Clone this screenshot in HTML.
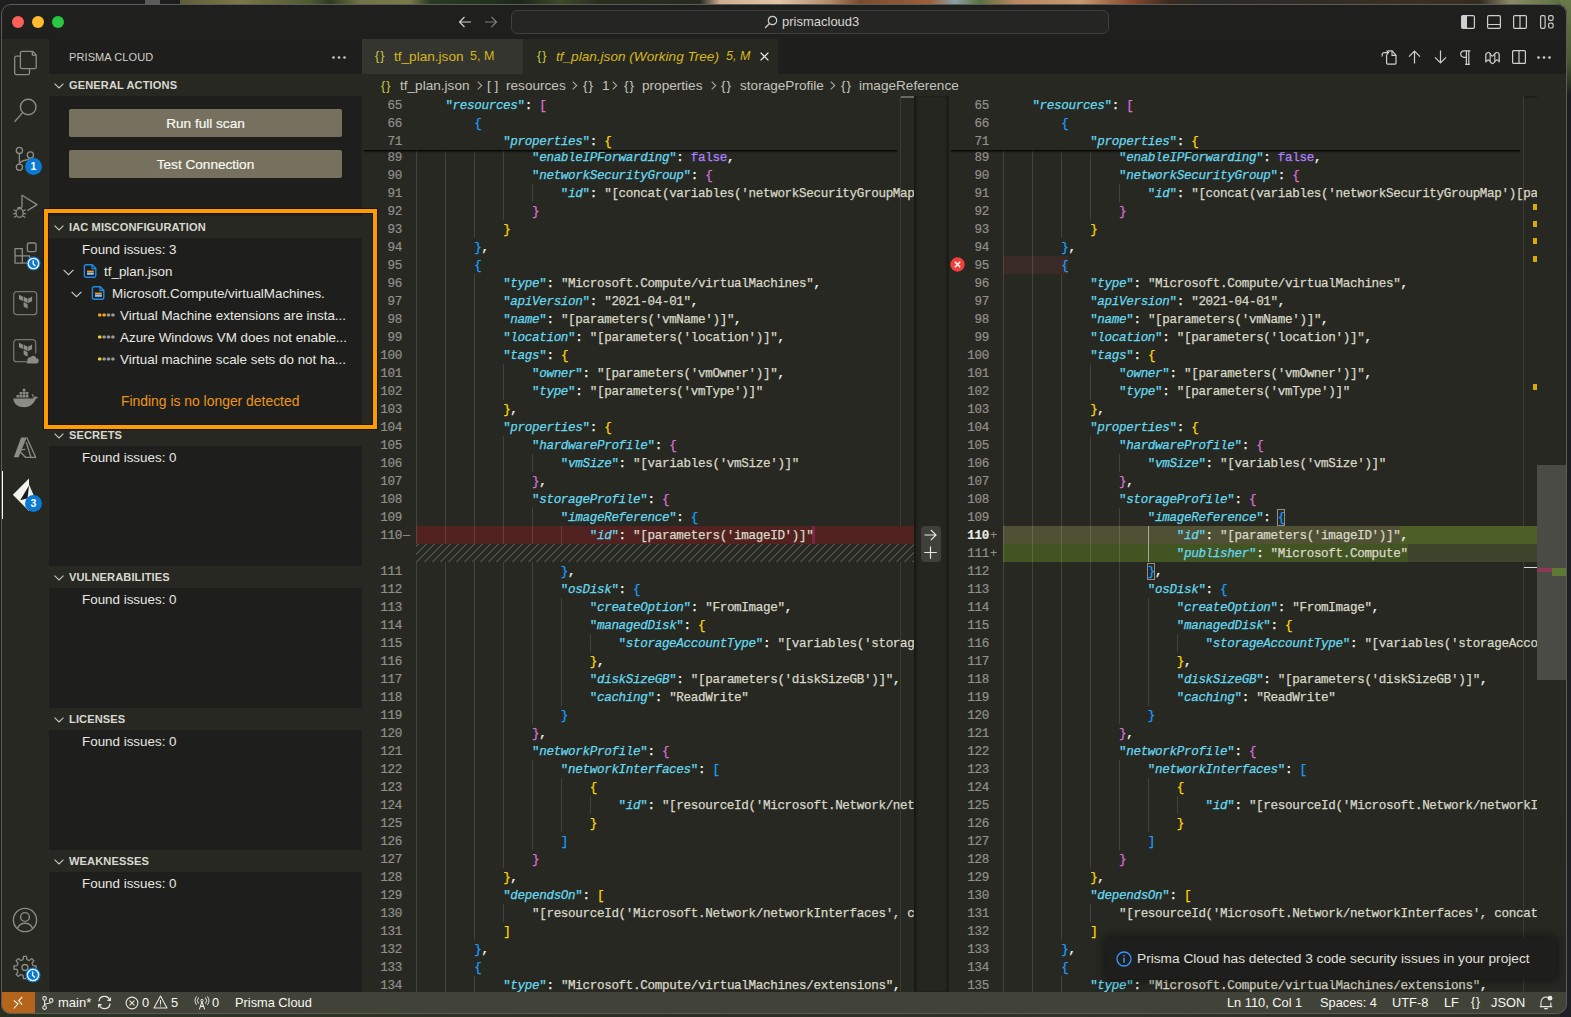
<!DOCTYPE html>
<html><head><meta charset="utf-8">
<style>
*{box-sizing:border-box;margin:0;padding:0}
html,body{width:1571px;height:1017px;overflow:hidden;background:#2b2a20}
body{position:relative;font-family:"Liberation Sans",sans-serif;color:#f8f8f2}
.abs{position:absolute}
#wall{position:absolute;left:0;top:0;width:1571px;height:1017px;
 background:linear-gradient(90deg,#1e1e1e 0,#1e1e1e 145px,#5a5a5a 145px,#5a5a5a 160px,#1e1e1e 160px,#1e1e1e 180px,#5e5e36 180px,#7a7648 240px,#4e5a30 310px,#2e3a22 330px,#707446 360px,#7a7a4a 410px,#2a3a22 430px,#22301e 490px,#1e261a 520px,#3e4a2a 560px,#2a2e20 600px,#262a1e 700px,#cfae8e 720px,#e0c4a6 780px,#b08a6a 830px,#7a4a30 860px,#9a603a 930px,#8aa0a8 955px,#5a7040 980px,#b88660 1015px,#c89a70 1080px,#8a4a30 1130px,#3a2a20 1170px,#2a2a2a 1210px,#2e2c26 1300px,#3a3022 1400px,#352c20 1480px,#8a8a6a 1510px,#6a7a4a 1545px,#4a6a3a 1571px)}
#wallb{position:absolute;left:0;top:1008px;width:1571px;height:9px;background:linear-gradient(90deg,#283022,#2e3424 300px,#2a2e22 700px,#30332a 1100px,#272b22 1571px)}
#wallr{position:absolute;left:1560px;top:0;width:11px;height:1017px;background:linear-gradient(180deg,#6a7a4a 0,#4a5a34 60px,#2a3222 85px,#1c1f22 95px,#1d2024 1017px)}
#win{position:absolute;left:1px;top:4px;width:1566px;height:1010px;border-radius:10px;overflow:hidden;background:#1e1f1c}
#winb{position:absolute;left:1px;top:4px;width:1566px;height:1010px;border-radius:10px;border:1px solid #5b5b58;pointer-events:none}
.w{position:absolute}
/* window coords: page x-1, y-4 */
#title{left:0;top:0;width:1571px;height:39px;background:#1f1f1d}
.tl{position:absolute;top:16px;width:12px;height:12px;border-radius:50%}
#search{left:511px;top:10px;width:598px;height:24px;border:1px solid #3f3f3c;border-radius:6px;background:#252523}
#actbar{left:0;top:39px;width:49px;height:953px;background:#272822}
#sidebar{left:49px;top:39px;width:313px;height:953px;background:#1e1f1c}
#editor{left:362px;top:39px;width:1209px;height:953px;background:#272822}
#status{left:0;top:992px;width:1571px;height:25px;background:#414339;font-size:12px}
.sbt{position:absolute;top:3px;line-height:15px;color:#f8f8f2;white-space:pre}
.sec{position:absolute;left:49px;width:313px;height:22px;background:#272822}
.sec span{position:absolute;left:20px;top:4px;line-height:14px;font-size:11.1px;font-weight:bold;color:#d8d8d0;letter-spacing:0.1px}
.chev{position:absolute;left:6px;top:6px;width:10px;height:10px}
.body{position:absolute;left:0;width:314px;background:#1e1f1c}
.fi{position:absolute;margin-top:1px;font-size:13.4px;color:#e8e8e2;white-space:pre;line-height:16px}
.btn{position:absolute;left:69px;width:273px;height:28px;border-radius:2px;background:#75715e;color:#f8f8f2;font-size:13.6px;text-align:center;line-height:30px;-webkit-text-stroke:0.2px currentColor}
.pane{position:absolute;overflow:hidden}
.ln{position:absolute;-webkit-text-stroke:0.2px currentColor;margin-top:1px;left:0;height:18px;line-height:18px;text-align:right;font-family:"Liberation Mono",monospace;font-size:12.6px;letter-spacing:-0.34px;color:#90908a}
.mk{position:absolute;margin-top:1px;height:18px;line-height:18px;font-family:"Liberation Mono",monospace;font-size:12px;color:#90908a}
.cl{position:absolute;margin-top:1px;height:18px;line-height:18px;white-space:pre;-webkit-text-stroke:0.25px currentColor;font-family:"Liberation Mono",monospace;font-size:12.6px;letter-spacing:-0.34px;color:#f8f8f2}
.ig{position:absolute;width:1px;height:18px;background:rgba(255,255,235,.13)}
.k{color:#66D9EF}
.k i{font-style:italic}
.s{color:#D9D9C8}
.p{color:#F8F8F2}
.n{color:#AE81FF}
.sticky{position:absolute;left:0;top:0;height:54px;background:#272822}
.stsh{position:absolute;left:2px;top:54px;height:3px;background:linear-gradient(#000 0,rgba(0,0,0,.55) 1px,rgba(0,0,0,0) 3px)}
.hatch{position:absolute;background:repeating-linear-gradient(-45deg,#272822 0,#272822 4.6px,#4b4b45 4.6px,#4b4b45 5.66px)}
.tab{position:absolute;top:0;height:35px;font-size:13.6px;line-height:35px;white-space:pre}
.bc{position:absolute;margin-top:1px;top:0;height:22px;line-height:22px;font-size:13.6px;color:#c4c4bc;white-space:pre}
svg{position:absolute;overflow:visible}
</style></head><body>
<div id="wall"></div><div id="wallb"></div><div id="wallr"></div>
<div id="win"><div class="w" style="left:-1px;top:-4px;width:1571px;height:1017px">
 <div id="title" class="w">
  <div class="tl" style="left:12px;background:#fe5f57"></div>
  <div class="tl" style="left:32px;background:#febc2e"></div>
  <div class="tl" style="left:52px;background:#28c840"></div>
  <svg style="left:458px;top:16px" width="14" height="12" viewBox="0 0 14 12"><path d="M13 6H1.5M6.5 1L1.5 6l5 5" stroke="#cfcfcf" stroke-width="1.2" fill="none"/></svg>
  <svg style="left:484px;top:16px" width="14" height="12" viewBox="0 0 14 12"><path d="M1 6h11.5M7.5 1l5 5-5 5" stroke="#7d7d7a" stroke-width="1.2" fill="none"/></svg>
  <div id="search" class="w"></div>
  <svg style="left:764px;top:15px" width="14" height="14" viewBox="0 0 14 14"><circle cx="8.5" cy="5.5" r="4.2" stroke="#cfcfcf" stroke-width="1.2" fill="none"/><path d="M5.5 8.5L1 13" stroke="#cfcfcf" stroke-width="1.2"/></svg>
  <div class="abs" style="left:782px;top:14px;font-size:13px;line-height:16px;color:#d6d6d2">prismacloud3</div>
  <!-- layout icons -->
  <svg style="left:1461px;top:15px" width="14" height="14" viewBox="0 0 14 14"><rect x="0.6" y="0.6" width="12.8" height="12.8" rx="1.3" stroke="#cfcfcf" stroke-width="1.2" fill="none"/><rect x="1" y="1" width="5" height="12" fill="#cfcfcf"/></svg>
  <svg style="left:1487px;top:15px" width="14" height="14" viewBox="0 0 14 14"><rect x="0.6" y="0.6" width="12.8" height="12.8" rx="1.3" stroke="#cfcfcf" stroke-width="1.2" fill="none"/><path d="M1 9.5h12" stroke="#cfcfcf" stroke-width="1.2"/></svg>
  <svg style="left:1513px;top:15px" width="14" height="14" viewBox="0 0 14 14"><rect x="0.6" y="0.6" width="12.8" height="12.8" rx="1.3" stroke="#cfcfcf" stroke-width="1.2" fill="none"/><path d="M7 1v12" stroke="#cfcfcf" stroke-width="1.2"/></svg>
  <svg style="left:1540px;top:15px" width="14" height="14" viewBox="0 0 14 14"><rect x="0.6" y="0.6" width="4.5" height="12.8" rx="1.3" stroke="#cfcfcf" stroke-width="1.2" fill="none"/><rect x="8.6" y="0.6" width="4.5" height="4.8" rx="1.5" stroke="#cfcfcf" stroke-width="1.2" fill="none"/><rect x="8.6" y="8.2" width="4.5" height="4.8" rx="1.5" stroke="#cfcfcf" stroke-width="1.2" fill="none"/></svg>
 </div>

 <div id="actbar" class="w"></div>
<!-- explorer -->
<svg style="left:13px;top:50px" width="24" height="26" viewBox="0 0 24 26"><path d="M7.2 6.2H3.3a1.6 1.6 0 0 0-1.6 1.6v15.3a1.6 1.6 0 0 0 1.6 1.6h11.6a1.6 1.6 0 0 0 1.6-1.6v-4.3" stroke="#8c8c86" stroke-width="1.3" fill="none"/><path d="M9 1.3h10.6l3.6 3.6v12.2a1.6 1.6 0 0 1-1.6 1.6H9a1.6 1.6 0 0 1-1.6-1.6V2.9A1.6 1.6 0 0 1 9 1.3zM19.3 1.3v3.8h3.9" stroke="#8c8c86" stroke-width="1.3" fill="none" stroke-linejoin="round"/></svg>
<!-- search -->
<svg style="left:13px;top:97px" width="26" height="27" viewBox="0 0 26 27"><circle cx="15.2" cy="10" r="7.8" stroke="#8c8c86" stroke-width="1.4" fill="none"/><path d="M9.6 15.6L1.6 24.8" stroke="#8c8c86" stroke-width="1.4"/></svg>
<!-- scm -->
<svg style="left:13px;top:144px" width="26" height="28" viewBox="0 0 26 28"><circle cx="6.4" cy="6.4" r="3.1" stroke="#8c8c86" stroke-width="1.3" fill="none"/><circle cx="17.4" cy="11" r="3.1" stroke="#8c8c86" stroke-width="1.3" fill="none"/><circle cx="6.4" cy="23.3" r="3.1" stroke="#8c8c86" stroke-width="1.3" fill="none"/><path d="M6.4 9.5v10.7M6.4 20.2c0-5 11-3.5 11-6.1" stroke="#8c8c86" stroke-width="1.3" fill="none"/></svg>
<div class="abs" style="left:25px;top:158px;width:17px;height:17px;border-radius:50%;background:#0a7ad4;color:#fff;font-size:10.5px;font-weight:bold;text-align:center;line-height:17px">1</div>
<!-- debug -->
<svg style="left:12px;top:193px" width="28" height="26" viewBox="0 0 28 26"><path d="M10 14.4V2.2L25 11.6l-9.6 6" stroke="#8c8c86" stroke-width="1.3" fill="none" stroke-linejoin="round"/><ellipse cx="7.6" cy="20" rx="3.6" ry="4.3" stroke="#8c8c86" stroke-width="1.3" fill="none"/><path d="M1.6 16.6l2.6 1.6M1.2 20.6h2.8M1.8 24.6l2.6-1.6M13.6 16.6l-2.6 1.6M14 20.6h-2.8M13.4 24.6l-2.6-1.6M5.6 15.8c0-2 4-2 4 0" stroke="#8c8c86" stroke-width="1.2" fill="none"/></svg>
<!-- extensions -->
<svg style="left:12px;top:240px" width="28" height="28" viewBox="0 0 28 28"><path d="M3 8.6h7.3v7.3H3zM3 15.9h7.3v7.3H3zM10.3 15.9h7.3v7.3h-7.3z" stroke="#8c8c86" stroke-width="1.3" fill="none" stroke-linejoin="round"/><rect x="15.4" y="3" width="8.6" height="8.6" rx="1.4" stroke="#8c8c86" stroke-width="1.3" fill="none"/></svg>
<svg style="left:26px;top:256px" width="15" height="15" viewBox="0 0 15 15"><circle cx="7.5" cy="7.5" r="7" fill="#0a7ad4"/><circle cx="7.5" cy="7.5" r="5.2" stroke="#fff" stroke-width="1.3" fill="none"/><path d="M7.2 4.3v3.6l2.2 2" stroke="#fff" stroke-width="1.3" fill="none"/></svg>
<!-- terraform -->
<svg style="left:13px;top:291px" width="25" height="25" viewBox="0 0 25 25"><rect x="0.7" y="0.7" width="23" height="23" rx="3" stroke="#76766f" stroke-width="1.3" fill="none"/><path d="M10.6 5.4l4 2.3v4.6l-4-2.3zM15.1 7.7l4-2.3V10l-4 2.3zM5.9 3.4l4 2.3v4.6l-4-2.3zM10.6 10.9l4 2.3v4.6l-4-2.3z" fill="#8c8c86"/></svg>
<svg style="left:13px;top:339px" width="25" height="25" viewBox="0 0 25 25"><path d="M22.7 14.5V3.7a3 3 0 0 0-3-3H3.7a3 3 0 0 0-3 3v16a3 3 0 0 0 3 3h9.5" stroke="#76766f" stroke-width="1.3" fill="none"/><path d="M10.6 5.4l4 2.3v4.6l-4-2.3zM15.1 7.7l4-2.3V10l-4 2.3zM5.9 3.4l4 2.3v4.6l-4-2.3zM10.6 10.9l4 2.3v4.6l-4-2.3z" fill="#8c8c86"/><path d="M14.5 24.5h8.5a2.6 2.6 0 0 0 .2-5.2 3 3 0 0 0-5.6-1 2.5 2.5 0 0 0-3.1 3.2 1.6 1.6 0 0 0 0 3z" fill="#8c8c86"/></svg>
<!-- docker -->
<svg style="left:12px;top:388px" width="27" height="22" viewBox="0 0 27 22"><path d="M1.2 10.5h19.6c.6-1.4 1.8-2.2 3.2-2 1 .1 1.8.6 2.3 1.2-.8.4-1.6.8-2.4.9-1.6 4.8-5.4 8.6-11.4 8.6C6.2 19.2 1.6 16.4 1.2 10.5z" fill="#8c8c86"/><path d="M4.5 7h2.6v2.6H4.5zM7.6 7h2.6v2.6H7.6zM10.7 7h2.6v2.6h-2.6zM13.8 7h2.6v2.6h-2.6zM7.6 3.9h2.6v2.6H7.6zM10.7 3.9h2.6v2.6h-2.6zM13.8 3.9h2.6v2.6h-2.6zM10.7.8h2.6v2.6h-2.6z" fill="#8c8c86"/><path d="M20 6.2c.8.6 1.2 1.6 1.1 2.6" stroke="#8c8c86" stroke-width="1.3" fill="none"/></svg>
<!-- azure -->
<svg style="left:13px;top:436px" width="24" height="23" viewBox="0 0 24 23"><path d="M8.1 1.4h5.6L5.6 21.3H.8z" fill="#8c8c86"/><path d="M13.7 1.4l9 19.9H12.4L5.9 14.2l6.5-.8" stroke="#8c8c86" stroke-width="1.3" fill="none" stroke-linejoin="round"/><path d="M13.2 6.2l4.8 15" stroke="#8c8c86" stroke-width="1.3"/></svg>
<!-- prisma active -->
<div class="abs" style="left:1px;top:471px;width:2px;height:48px;background:#f8f8f2"></div>
<svg style="left:12px;top:478px" width="24" height="34" viewBox="0 0 24 34"><path d="M17 0.6L0.8 16.8 17 33z" fill="#f3f3ee"/><path d="M17 6.6l-1.2 13.8 6.6-1.4z" fill="#f3f3ee"/><path d="M17 7.6l-8.8 14.6 7.4-2z" fill="#1a1a1a"/></svg>
<div class="abs" style="left:25px;top:495px;width:17px;height:17px;border-radius:50%;background:#0a7ad4;color:#fff;font-size:10.5px;font-weight:bold;text-align:center;line-height:17px">3</div>
<!-- account -->
<svg style="left:12px;top:907px" width="26" height="26" viewBox="0 0 26 26"><circle cx="13" cy="13" r="11.6" stroke="#8c8c86" stroke-width="1.4" fill="none"/><circle cx="13" cy="10" r="4.4" stroke="#8c8c86" stroke-width="1.4" fill="none"/><path d="M5.4 21.4c1.4-3.6 4.2-5.2 7.6-5.2s6.2 1.6 7.6 5.2" stroke="#8c8c86" stroke-width="1.4" fill="none"/></svg>
<!-- settings -->
<svg style="left:12px;top:955px" width="26" height="26" viewBox="0 0 26 26"><path d="M11.51 1.40 L14.49 1.40 L14.91 4.53 L17.28 5.51 L19.79 3.60 L21.90 5.71 L19.99 8.22 L20.97 10.59 L24.10 11.01 L24.10 13.99 L20.97 14.41 L19.99 16.78 L21.90 19.29 L19.79 21.40 L17.28 19.49 L14.91 20.47 L14.49 23.60 L11.51 23.60 L11.09 20.47 L8.72 19.49 L6.21 21.40 L4.10 19.29 L6.01 16.78 L5.03 14.41 L1.90 13.99 L1.90 11.01 L5.03 10.59 L6.01 8.22 L4.10 5.71 L6.21 3.60 L8.72 5.51 L11.09 4.53z" stroke="#8c8c86" stroke-width="1.3" fill="none" stroke-linejoin="round"/><circle cx="13" cy="12.5" r="3" stroke="#8c8c86" stroke-width="1.3" fill="none"/></svg>
<svg style="left:25px;top:967px" width="16" height="16" viewBox="0 0 16 16"><circle cx="8" cy="8" r="7.6" fill="#0a7ad4"/><circle cx="8" cy="8" r="5.6" stroke="#fff" stroke-width="1.3" fill="none"/><path d="M7.6 4.6v3.8l2.4 2" stroke="#fff" stroke-width="1.3" fill="none"/></svg>


 <div id="sidebar" class="w"></div>
<div class="abs" style="left:69px;top:50px;font-size:11px;line-height:14px;color:#cfcfc8;letter-spacing:0.1px">PRISMA CLOUD</div>
<svg style="left:332px;top:56px" width="14" height="3" viewBox="0 0 14 3"><circle cx="1.5" cy="1.5" r="1.35" fill="#c8c8c2"/><circle cx="7" cy="1.5" r="1.35" fill="#c8c8c2"/><circle cx="12.5" cy="1.5" r="1.35" fill="#c8c8c2"/></svg>
<!-- sections -->
<div class="sec" style="top:74px"><svg class="chev" style="left:5px;top:7px" width="11" height="7" viewBox="0 0 11 7"><path d="M0.6 0.8L5.5 5.7 10.4 0.8" stroke="#c8c8c2" stroke-width="1.2" fill="none"/></svg><span>GENERAL ACTIONS</span></div>
<div class="btn" style="top:109px">Run full scan</div>
<div class="btn" style="top:150px">Test Connection</div>
<div class="sec" style="top:216px"><svg class="chev" style="left:5px;top:7px" width="11" height="7" viewBox="0 0 11 7"><path d="M0.6 0.8L5.5 5.7 10.4 0.8" stroke="#c8c8c2" stroke-width="1.2" fill="none"/></svg><span>IAC MISCONFIGURATION</span></div>
<div class="fi" style="left:82px;top:241px">Found issues: 3</div>
<svg style="left:63px;top:269px" width="11" height="7" viewBox="0 0 11 7"><path d="M0.6 0.8L5.5 5.7 10.4 0.8" stroke="#c8c8c2" stroke-width="1.2" fill="none"/></svg>
<svg style="left:84px;top:264px" width="13" height="14" viewBox="0 0 13 14"><path d="M1.8 0.8h6.4l3.6 3.6v7.4a1.4 1.4 0 0 1-1.4 1.4H1.8A1.4 1.4 0 0 1 .4 11.8V2.2A1.4 1.4 0 0 1 1.8.8z" stroke="#1e8ae6" stroke-width="1.4" fill="none"/><path d="M8 .8v3.8h3.8" stroke="#1e8ae6" stroke-width="1.2" fill="none"/><rect x="3" y="6.6" width="6.8" height="1.8" fill="#f29a2e"/><rect x="3" y="8.6" width="6.8" height="2.2" fill="#8ec5f0"/></svg>
<div class="fi" style="left:104px;top:263px">tf_plan.json</div>
<svg style="left:71px;top:291px" width="11" height="7" viewBox="0 0 11 7"><path d="M0.6 0.8L5.5 5.7 10.4 0.8" stroke="#c8c8c2" stroke-width="1.2" fill="none"/></svg>
<svg style="left:92px;top:286px" width="13" height="14" viewBox="0 0 13 14"><path d="M1.8 0.8h6.4l3.6 3.6v7.4a1.4 1.4 0 0 1-1.4 1.4H1.8A1.4 1.4 0 0 1 .4 11.8V2.2A1.4 1.4 0 0 1 1.8.8z" stroke="#1e8ae6" stroke-width="1.4" fill="none"/><path d="M8 .8v3.8h3.8" stroke="#1e8ae6" stroke-width="1.2" fill="none"/><rect x="3" y="6.6" width="6.8" height="1.8" fill="#f29a2e"/><rect x="3" y="8.6" width="6.8" height="2.2" fill="#8ec5f0"/></svg>
<div class="fi" style="left:112px;top:285px">Microsoft.Compute/virtualMachines.</div>
<svg style="left:98px;top:313px" width="17" height="4" viewBox="0 0 17 4"><rect x="0" y="0.5" width="3.4" height="3" rx="1.2" fill="#f5a623"/><rect x="4.4" y="0.5" width="3.4" height="3" rx="1.2" fill="#f5a623"/><rect x="8.8" y="0.5" width="3.4" height="3" rx="1.2" fill="#9a9a96"/><rect x="13.2" y="0.5" width="3.4" height="3" rx="1.2" fill="#9a9a96"/></svg>
<div class="fi" style="left:120px;top:307px">Virtual Machine extensions are insta...</div>
<svg style="left:98px;top:335px" width="17" height="4" viewBox="0 0 17 4"><rect x="0" y="0.5" width="3.4" height="3" rx="1.2" fill="#f5d033"/><rect x="4.4" y="0.5" width="3.4" height="3" rx="1.2" fill="#9a9a96"/><rect x="8.8" y="0.5" width="3.4" height="3" rx="1.2" fill="#9a9a96"/><rect x="13.2" y="0.5" width="3.4" height="3" rx="1.2" fill="#9a9a96"/></svg>
<div class="fi" style="left:120px;top:329px">Azure Windows VM does not enable...</div>
<svg style="left:98px;top:357px" width="17" height="4" viewBox="0 0 17 4"><rect x="0" y="0.5" width="3.4" height="3" rx="1.2" fill="#f5d033"/><rect x="4.4" y="0.5" width="3.4" height="3" rx="1.2" fill="#9a9a96"/><rect x="8.8" y="0.5" width="3.4" height="3" rx="1.2" fill="#9a9a96"/><rect x="13.2" y="0.5" width="3.4" height="3" rx="1.2" fill="#9a9a96"/></svg>
<div class="fi" style="left:120px;top:351px">Virtual machine scale sets do not ha...</div>
<div class="fi" style="left:121px;top:392px;color:#ec951c;font-size:13.9px">Finding is no longer detected</div>
<div class="sec" style="top:424px"><svg class="chev" style="left:5px;top:7px" width="11" height="7" viewBox="0 0 11 7"><path d="M0.6 0.8L5.5 5.7 10.4 0.8" stroke="#c8c8c2" stroke-width="1.2" fill="none"/></svg><span>SECRETS</span></div>
<div class="fi" style="left:82px;top:449px">Found issues: 0</div>
<div class="sec" style="top:566px"><svg class="chev" style="left:5px;top:7px" width="11" height="7" viewBox="0 0 11 7"><path d="M0.6 0.8L5.5 5.7 10.4 0.8" stroke="#c8c8c2" stroke-width="1.2" fill="none"/></svg><span>VULNERABILITIES</span></div>
<div class="fi" style="left:82px;top:591px">Found issues: 0</div>
<div class="sec" style="top:708px"><svg class="chev" style="left:5px;top:7px" width="11" height="7" viewBox="0 0 11 7"><path d="M0.6 0.8L5.5 5.7 10.4 0.8" stroke="#c8c8c2" stroke-width="1.2" fill="none"/></svg><span>LICENSES</span></div>
<div class="fi" style="left:82px;top:733px">Found issues: 0</div>
<div class="sec" style="top:850px"><svg class="chev" style="left:5px;top:7px" width="11" height="7" viewBox="0 0 11 7"><path d="M0.6 0.8L5.5 5.7 10.4 0.8" stroke="#c8c8c2" stroke-width="1.2" fill="none"/></svg><span>WEAKNESSES</span></div>
<div class="fi" style="left:82px;top:875px">Found issues: 0</div>
<!-- orange highlight box -->
<div class="abs" style="z-index:5;left:44px;top:209px;width:333px;height:220px;border:4px solid #ff9a00;box-shadow:0 0 0 1px rgba(10,14,20,.6),inset 0 0 0 1px rgba(10,14,20,.6)"></div>


 <div id="editor" class="w"></div>
 <div class="abs" style="left:362px;top:39px;width:1209px;height:35px;background:#1e1f1c"></div>
<div class="abs" style="left:362px;top:39px;width:161px;height:35px;background:#34352f"></div>
<div class="abs" style="left:523px;top:39px;width:255px;height:35px;background:#272822"></div>
<div class="tab" style="left:375px;top:39px;color:#cbcb41;font-size:12.5px;letter-spacing:1px">{}</div>
<div class="tab" style="left:394px;top:39px;color:#d7b71d">tf_plan.json</div>
<div class="tab" style="left:470px;top:39px;color:#d7b71d;font-size:12.5px">5, M</div>
<div class="tab" style="left:537px;top:39px;color:#cbcb41;font-size:12.5px;letter-spacing:1px">{}</div>
<div class="tab" style="left:556px;top:39px;color:#d7b71d;font-style:italic">tf_plan.json (Working Tree)</div>
<div class="tab" style="left:726px;top:39px;color:#d7b71d;font-style:italic;font-size:12.5px">5, M</div>
<svg style="left:760px;top:52px" width="9" height="9" viewBox="0 0 9 9"><path d="M.6.6l7.8 7.8M8.4.6L.6 8.4" stroke="#e8e8e2" stroke-width="1.3"/></svg>
<!-- editor toolbar -->
<svg style="left:1381px;top:50px" width="16" height="15" viewBox="0 0 16 15"><path d="M5.6 4.4V13a1.2 1.2 0 0 0 1.2 1.2h7a1.2 1.2 0 0 0 1.2-1.2V5.4L11.2.8H6.8" stroke="#cfcfcb" stroke-width="1.2" fill="none" stroke-linejoin="round"/><path d="M11 .8v4.6h4.2" stroke="#cfcfcb" stroke-width="1.1" fill="none"/><path d="M1.2 6.4V4.6a2 2 0 0 1 2-2h4M5.6 .6l2 2-2 2" stroke="#cfcfcb" stroke-width="1.2" fill="none"/></svg>
<svg style="left:1408px;top:50px" width="13" height="14" viewBox="0 0 13 14"><path d="M6.5 13.6V1.2M1 6.6l5.5-5.5L12 6.6" stroke="#cfcfcb" stroke-width="1.2" fill="none"/></svg>
<svg style="left:1434px;top:50px" width="13" height="14" viewBox="0 0 13 14"><path d="M6.5.4v12.4M1 7.4l5.5 5.5L12 7.4" stroke="#cfcfcb" stroke-width="1.2" fill="none"/></svg>
<svg style="left:1460px;top:50px" width="11" height="15" viewBox="0 0 11 15"><path d="M5 .8h5.4M6.4 .8v13.6M8.8 .8v13.6M6.4 7.4H4a3.3 3.3 0 0 1 0-6.6h2.4" stroke="#cfcfcb" stroke-width="1.2" fill="none"/><path d="M5.2 14.4h4.6" stroke="#cfcfcb" stroke-width="1.2"/></svg>
<svg style="left:1485px;top:51px" width="15" height="13" viewBox="0 0 15 13"><path d="M.8 3.2c2-2.4 3.4-2.4 4.6 0s2.6 2.4 4.2 0 3-2.4 4.6 0v7.6c-1.6-2.4-3-2.4-4.6 0s-2.8 2.4-4.2 0-2.6-2.4-4.6 0z" stroke="#bdbdb8" stroke-width="1.4" fill="none" stroke-linejoin="round"/><path d="M5.2 2v9M9.8 2v9" stroke="#bdbdb8" stroke-width="1.2"/></svg>
<svg style="left:1512px;top:50px" width="14" height="14" viewBox="0 0 14 14"><rect x=".6" y=".6" width="12.8" height="12.8" rx="1" stroke="#cfcfcb" stroke-width="1.2" fill="none"/><path d="M7 .6v12.8" stroke="#cfcfcb" stroke-width="1.2"/></svg>
<svg style="left:1537px;top:56px" width="14" height="3" viewBox="0 0 14 3"><circle cx="1.5" cy="1.5" r="1.35" fill="#cfcfcb"/><circle cx="7" cy="1.5" r="1.35" fill="#cfcfcb"/><circle cx="12.5" cy="1.5" r="1.35" fill="#cfcfcb"/></svg>
<!-- breadcrumbs -->
<div class="abs" style="left:362px;top:74px;width:1205px;height:22px;background:#272822"></div>
<div class="bc" style="left:381px;top:74px;color:#cbcb41;font-size:12.5px;letter-spacing:1px">{}</div>
<div class="bc" style="left:400px;top:74px">tf_plan.json</div>
<div class="bc" style="left:487px;top:74px">[ ]</div>
<div class="bc" style="left:506px;top:74px">resources</div>
<div class="bc" style="left:583px;top:74px;letter-spacing:1px">{}</div>
<div class="bc" style="left:602px;top:74px">1</div>
<div class="bc" style="left:624px;top:74px;letter-spacing:1px">{}</div>
<div class="bc" style="left:642px;top:74px">properties</div>
<div class="bc" style="left:721px;top:74px;letter-spacing:1px">{}</div>
<div class="bc" style="left:740px;top:74px">storageProfile</div>
<div class="bc" style="left:841px;top:74px;letter-spacing:1px">{}</div>
<div class="bc" style="left:859px;top:74px">imageReference</div>
<svg style="left:477px;top:81px" width="6" height="9" viewBox="0 0 6 9"><path d="M.7.7l4 3.8-4 3.8" stroke="#a8a8a2" stroke-width="1.1" fill="none"/></svg>
<svg style="left:572px;top:81px" width="6" height="9" viewBox="0 0 6 9"><path d="M.7.7l4 3.8-4 3.8" stroke="#a8a8a2" stroke-width="1.1" fill="none"/></svg>
<svg style="left:612px;top:81px" width="6" height="9" viewBox="0 0 6 9"><path d="M.7.7l4 3.8-4 3.8" stroke="#a8a8a2" stroke-width="1.1" fill="none"/></svg>
<svg style="left:711px;top:81px" width="6" height="9" viewBox="0 0 6 9"><path d="M.7.7l4 3.8-4 3.8" stroke="#a8a8a2" stroke-width="1.1" fill="none"/></svg>
<svg style="left:830px;top:81px" width="6" height="9" viewBox="0 0 6 9"><path d="M.7.7l4 3.8-4 3.8" stroke="#a8a8a2" stroke-width="1.1" fill="none"/></svg>
<!-- divider between panes -->
<div class="abs" style="left:914px;top:96px;width:35px;height:896px;background:#252620;box-shadow:inset 3px 0 3px -1px rgba(0,0,0,.45),inset -3px 0 3px -1px rgba(0,0,0,.35)"></div>
<div class="abs" style="left:921px;top:526px;width:20px;height:36px;border-radius:4px;background:#3f403a"></div>
<svg style="left:924px;top:529px" width="13" height="12" viewBox="0 0 13 12"><path d="M.6 6h11.4M6.8 .8L12 6l-5.2 5.2" stroke="#e8e8e2" stroke-width="1.2" fill="none"/></svg>
<svg style="left:924px;top:546px" width="13" height="13" viewBox="0 0 13 13"><path d="M6.5 .4v12.4M.2 6.5h12.6" stroke="#e8e8e2" stroke-width="1.2"/></svg>
<!-- scrollbars lines -->
<div class="abs" style="left:900px;top:96px;width:1px;height:896px;background:#3b3c36"></div>
<div class="abs" style="left:901px;top:96px;width:13px;height:2px;background:#6b6b66"></div>
<div class="abs" style="left:1523px;top:96px;width:1px;height:896px;background:#3b3c36"></div>
<div class="abs" style="left:1524px;top:96px;width:13px;height:3px;background:linear-gradient(#1b1c18,#272822)"></div>
<div class="abs" style="left:1524px;top:567px;width:13px;height:1px;background:#dcdcd6"></div>
<!-- overview markers right pane -->
<div class="abs" style="left:1533px;top:204px;width:4px;height:6px;background:#d9a70f"></div>
<div class="abs" style="left:1533px;top:221px;width:4px;height:6px;background:#d9a70f"></div>
<div class="abs" style="left:1533px;top:238px;width:4px;height:6px;background:#d9a70f"></div>
<div class="abs" style="left:1533px;top:256px;width:4px;height:6px;background:#d9a70f"></div>
<div class="abs" style="left:1533px;top:384px;width:4px;height:6px;background:#d9a70f"></div>
<!-- diff overview ruler -->
<div class="abs" style="left:1537px;top:465px;width:30px;height:215px;background:#4a4b45"></div>
<div class="abs" style="left:1537px;top:568px;width:15px;height:4px;background:#8a3a55"></div>
<div class="abs" style="left:1552px;top:568px;width:15px;height:8px;background:#5c7a33"></div>
<svg style="left:950px;top:257px;z-index:3" width="15" height="15" viewBox="0 0 15 15"><circle cx="7.5" cy="7.5" r="7.2" fill="#f0413c"/><path d="M4.8 4.8l5.4 5.4M10.2 4.8l-5.4 5.4" stroke="#fff" stroke-width="1.5"/></svg>
<div class="abs" style="z-index:3;left:1277px;top:509px;width:8px;height:17px;border:1px solid #8f8f88"></div>
<div class="abs" style="z-index:3;left:1147px;top:563px;width:8px;height:17px;border:1px solid #8f8f88"></div>

 <div class="pane" style="left:362px;top:96px;width:552px;height:896px">
<div style="position:absolute;left:54px;top:430px;width:600px;height:18px;background:#522220"></div><div class="hatch" style="left:54px;top:448px;width:600px;height:18px"></div><div style="position:absolute;left:450.2px;top:430px;width:2.5px;height:18px;background:#7d2547"></div>
<div class="ig" style="left:54px;top:52px"></div>
<div class="ig" style="left:83px;top:52px"></div>
<div class="ig" style="left:112px;top:52px"></div>
<div class="ig" style="left:141px;top:52px"></div>
<div class="ln" style="top:52px;width:40px">89</div>
<div class="cl" style="left:54.5px;top:52px">                <span class="k">"<i>enableIPForwarding</i>"</span><span class="p">:</span><span class="p"> </span><span class="n">false</span><span class="p">,</span></div>
<div class="ig" style="left:54px;top:70px"></div>
<div class="ig" style="left:83px;top:70px"></div>
<div class="ig" style="left:112px;top:70px"></div>
<div class="ig" style="left:141px;top:70px"></div>
<div class="ln" style="top:70px;width:40px">90</div>
<div class="cl" style="left:54.5px;top:70px">                <span class="k">"<i>networkSecurityGroup</i>"</span><span class="p">:</span><span class="p"> </span><span style="color:#DA70D6">{</span></div>
<div class="ig" style="left:54px;top:88px"></div>
<div class="ig" style="left:83px;top:88px"></div>
<div class="ig" style="left:112px;top:88px"></div>
<div class="ig" style="left:141px;top:88px"></div>
<div class="ig" style="left:170px;top:88px"></div>
<div class="ln" style="top:88px;width:40px">91</div>
<div class="cl" style="left:54.5px;top:88px">                    <span class="k">"<i>id</i>"</span><span class="p">:</span><span class="p"> </span><span class="s">"[concat(variables('networkSecurityGroupMap')[parameters('nsg')])]"</span></div>
<div class="ig" style="left:54px;top:106px"></div>
<div class="ig" style="left:83px;top:106px"></div>
<div class="ig" style="left:112px;top:106px"></div>
<div class="ig" style="left:141px;top:106px"></div>
<div class="ln" style="top:106px;width:40px">92</div>
<div class="cl" style="left:54.5px;top:106px">                <span style="color:#DA70D6">}</span></div>
<div class="ig" style="left:54px;top:124px"></div>
<div class="ig" style="left:83px;top:124px"></div>
<div class="ig" style="left:112px;top:124px"></div>
<div class="ln" style="top:124px;width:40px">93</div>
<div class="cl" style="left:54.5px;top:124px">            <span style="color:#FFD700">}</span></div>
<div class="ig" style="left:54px;top:142px"></div>
<div class="ig" style="left:83px;top:142px"></div>
<div class="ln" style="top:142px;width:40px">94</div>
<div class="cl" style="left:54.5px;top:142px">        <span style="color:#179FFF">}</span><span class="p">,</span></div>
<div class="ig" style="left:54px;top:160px"></div>
<div class="ig" style="left:83px;top:160px"></div>
<div class="ln" style="top:160px;width:40px">95</div>
<div class="cl" style="left:54.5px;top:160px">        <span style="color:#179FFF">{</span></div>
<div class="ig" style="left:54px;top:178px"></div>
<div class="ig" style="left:83px;top:178px"></div>
<div class="ig" style="left:112px;top:178px"></div>
<div class="ln" style="top:178px;width:40px">96</div>
<div class="cl" style="left:54.5px;top:178px">            <span class="k">"<i>type</i>"</span><span class="p">:</span><span class="p"> </span><span class="s">"Microsoft.Compute/virtualMachines"</span><span class="p">,</span></div>
<div class="ig" style="left:54px;top:196px"></div>
<div class="ig" style="left:83px;top:196px"></div>
<div class="ig" style="left:112px;top:196px"></div>
<div class="ln" style="top:196px;width:40px">97</div>
<div class="cl" style="left:54.5px;top:196px">            <span class="k">"<i>apiVersion</i>"</span><span class="p">:</span><span class="p"> </span><span class="s">"2021-04-01"</span><span class="p">,</span></div>
<div class="ig" style="left:54px;top:214px"></div>
<div class="ig" style="left:83px;top:214px"></div>
<div class="ig" style="left:112px;top:214px"></div>
<div class="ln" style="top:214px;width:40px">98</div>
<div class="cl" style="left:54.5px;top:214px">            <span class="k">"<i>name</i>"</span><span class="p">:</span><span class="p"> </span><span class="s">"[parameters('vmName')]"</span><span class="p">,</span></div>
<div class="ig" style="left:54px;top:232px"></div>
<div class="ig" style="left:83px;top:232px"></div>
<div class="ig" style="left:112px;top:232px"></div>
<div class="ln" style="top:232px;width:40px">99</div>
<div class="cl" style="left:54.5px;top:232px">            <span class="k">"<i>location</i>"</span><span class="p">:</span><span class="p"> </span><span class="s">"[parameters('location')]"</span><span class="p">,</span></div>
<div class="ig" style="left:54px;top:250px"></div>
<div class="ig" style="left:83px;top:250px"></div>
<div class="ig" style="left:112px;top:250px"></div>
<div class="ln" style="top:250px;width:40px">100</div>
<div class="cl" style="left:54.5px;top:250px">            <span class="k">"<i>tags</i>"</span><span class="p">:</span><span class="p"> </span><span style="color:#FFD700">{</span></div>
<div class="ig" style="left:54px;top:268px"></div>
<div class="ig" style="left:83px;top:268px"></div>
<div class="ig" style="left:112px;top:268px"></div>
<div class="ig" style="left:141px;top:268px"></div>
<div class="ln" style="top:268px;width:40px">101</div>
<div class="cl" style="left:54.5px;top:268px">                <span class="k">"<i>owner</i>"</span><span class="p">:</span><span class="p"> </span><span class="s">"[parameters('vmOwner')]"</span><span class="p">,</span></div>
<div class="ig" style="left:54px;top:286px"></div>
<div class="ig" style="left:83px;top:286px"></div>
<div class="ig" style="left:112px;top:286px"></div>
<div class="ig" style="left:141px;top:286px"></div>
<div class="ln" style="top:286px;width:40px">102</div>
<div class="cl" style="left:54.5px;top:286px">                <span class="k">"<i>type</i>"</span><span class="p">:</span><span class="p"> </span><span class="s">"[parameters('vmType')]"</span></div>
<div class="ig" style="left:54px;top:304px"></div>
<div class="ig" style="left:83px;top:304px"></div>
<div class="ig" style="left:112px;top:304px"></div>
<div class="ln" style="top:304px;width:40px">103</div>
<div class="cl" style="left:54.5px;top:304px">            <span style="color:#FFD700">}</span><span class="p">,</span></div>
<div class="ig" style="left:54px;top:322px"></div>
<div class="ig" style="left:83px;top:322px"></div>
<div class="ig" style="left:112px;top:322px"></div>
<div class="ln" style="top:322px;width:40px">104</div>
<div class="cl" style="left:54.5px;top:322px">            <span class="k">"<i>properties</i>"</span><span class="p">:</span><span class="p"> </span><span style="color:#FFD700">{</span></div>
<div class="ig" style="left:54px;top:340px"></div>
<div class="ig" style="left:83px;top:340px"></div>
<div class="ig" style="left:112px;top:340px"></div>
<div class="ig" style="left:141px;top:340px"></div>
<div class="ln" style="top:340px;width:40px">105</div>
<div class="cl" style="left:54.5px;top:340px">                <span class="k">"<i>hardwareProfile</i>"</span><span class="p">:</span><span class="p"> </span><span style="color:#DA70D6">{</span></div>
<div class="ig" style="left:54px;top:358px"></div>
<div class="ig" style="left:83px;top:358px"></div>
<div class="ig" style="left:112px;top:358px"></div>
<div class="ig" style="left:141px;top:358px"></div>
<div class="ig" style="left:170px;top:358px"></div>
<div class="ln" style="top:358px;width:40px">106</div>
<div class="cl" style="left:54.5px;top:358px">                    <span class="k">"<i>vmSize</i>"</span><span class="p">:</span><span class="p"> </span><span class="s">"[variables('vmSize')]"</span></div>
<div class="ig" style="left:54px;top:376px"></div>
<div class="ig" style="left:83px;top:376px"></div>
<div class="ig" style="left:112px;top:376px"></div>
<div class="ig" style="left:141px;top:376px"></div>
<div class="ln" style="top:376px;width:40px">107</div>
<div class="cl" style="left:54.5px;top:376px">                <span style="color:#DA70D6">}</span><span class="p">,</span></div>
<div class="ig" style="left:54px;top:394px"></div>
<div class="ig" style="left:83px;top:394px"></div>
<div class="ig" style="left:112px;top:394px"></div>
<div class="ig" style="left:141px;top:394px"></div>
<div class="ln" style="top:394px;width:40px">108</div>
<div class="cl" style="left:54.5px;top:394px">                <span class="k">"<i>storageProfile</i>"</span><span class="p">:</span><span class="p"> </span><span style="color:#DA70D6">{</span></div>
<div class="ig" style="left:54px;top:412px"></div>
<div class="ig" style="left:83px;top:412px"></div>
<div class="ig" style="left:112px;top:412px"></div>
<div class="ig" style="left:141px;top:412px"></div>
<div class="ig" style="left:170px;top:412px"></div>
<div class="ln" style="top:412px;width:40px">109</div>
<div class="cl" style="left:54.5px;top:412px">                    <span class="k">"<i>imageReference</i>"</span><span class="p">:</span><span class="p"> </span><span style="color:#179FFF">{</span></div>
<div class="ig" style="left:54px;top:430px"></div>
<div class="ig" style="left:83px;top:430px"></div>
<div class="ig" style="left:112px;top:430px"></div>
<div class="ig" style="left:141px;top:430px"></div>
<div class="ig" style="left:170px;top:430px"></div>
<div class="ig" style="left:199px;top:430px"></div>
<div class="ln" style="top:430px;width:40px">110</div>
<div class="mk" style="left:41px;top:430px">&#8212;</div>
<div class="cl" style="left:54.5px;top:430px">                        <span class="k">"<i>id</i>"</span><span class="p">:</span><span class="p"> </span><span class="s">"[parameters('imageID')]"</span></div>
<div class="ig" style="left:54px;top:466px"></div>
<div class="ig" style="left:83px;top:466px"></div>
<div class="ig" style="left:112px;top:466px"></div>
<div class="ig" style="left:141px;top:466px"></div>
<div class="ig" style="left:170px;top:466px"></div>
<div class="ln" style="top:466px;width:40px">111</div>
<div class="cl" style="left:54.5px;top:466px">                    <span style="color:#179FFF">}</span><span class="p">,</span></div>
<div class="ig" style="left:54px;top:484px"></div>
<div class="ig" style="left:83px;top:484px"></div>
<div class="ig" style="left:112px;top:484px"></div>
<div class="ig" style="left:141px;top:484px"></div>
<div class="ig" style="left:170px;top:484px"></div>
<div class="ln" style="top:484px;width:40px">112</div>
<div class="cl" style="left:54.5px;top:484px">                    <span class="k">"<i>osDisk</i>"</span><span class="p">:</span><span class="p"> </span><span style="color:#179FFF">{</span></div>
<div class="ig" style="left:54px;top:502px"></div>
<div class="ig" style="left:83px;top:502px"></div>
<div class="ig" style="left:112px;top:502px"></div>
<div class="ig" style="left:141px;top:502px"></div>
<div class="ig" style="left:170px;top:502px"></div>
<div class="ig" style="left:199px;top:502px"></div>
<div class="ln" style="top:502px;width:40px">113</div>
<div class="cl" style="left:54.5px;top:502px">                        <span class="k">"<i>createOption</i>"</span><span class="p">:</span><span class="p"> </span><span class="s">"FromImage"</span><span class="p">,</span></div>
<div class="ig" style="left:54px;top:520px"></div>
<div class="ig" style="left:83px;top:520px"></div>
<div class="ig" style="left:112px;top:520px"></div>
<div class="ig" style="left:141px;top:520px"></div>
<div class="ig" style="left:170px;top:520px"></div>
<div class="ig" style="left:199px;top:520px"></div>
<div class="ln" style="top:520px;width:40px">114</div>
<div class="cl" style="left:54.5px;top:520px">                        <span class="k">"<i>managedDisk</i>"</span><span class="p">:</span><span class="p"> </span><span style="color:#FFD700">{</span></div>
<div class="ig" style="left:54px;top:538px"></div>
<div class="ig" style="left:83px;top:538px"></div>
<div class="ig" style="left:112px;top:538px"></div>
<div class="ig" style="left:141px;top:538px"></div>
<div class="ig" style="left:170px;top:538px"></div>
<div class="ig" style="left:199px;top:538px"></div>
<div class="ig" style="left:228px;top:538px"></div>
<div class="ln" style="top:538px;width:40px">115</div>
<div class="cl" style="left:54.5px;top:538px">                            <span class="k">"<i>storageAccountType</i>"</span><span class="p">:</span><span class="p"> </span><span class="s">"[variables('storageAccountType')]"</span></div>
<div class="ig" style="left:54px;top:556px"></div>
<div class="ig" style="left:83px;top:556px"></div>
<div class="ig" style="left:112px;top:556px"></div>
<div class="ig" style="left:141px;top:556px"></div>
<div class="ig" style="left:170px;top:556px"></div>
<div class="ig" style="left:199px;top:556px"></div>
<div class="ln" style="top:556px;width:40px">116</div>
<div class="cl" style="left:54.5px;top:556px">                        <span style="color:#FFD700">}</span><span class="p">,</span></div>
<div class="ig" style="left:54px;top:574px"></div>
<div class="ig" style="left:83px;top:574px"></div>
<div class="ig" style="left:112px;top:574px"></div>
<div class="ig" style="left:141px;top:574px"></div>
<div class="ig" style="left:170px;top:574px"></div>
<div class="ig" style="left:199px;top:574px"></div>
<div class="ln" style="top:574px;width:40px">117</div>
<div class="cl" style="left:54.5px;top:574px">                        <span class="k">"<i>diskSizeGB</i>"</span><span class="p">:</span><span class="p"> </span><span class="s">"[parameters('diskSizeGB')]"</span><span class="p">,</span></div>
<div class="ig" style="left:54px;top:592px"></div>
<div class="ig" style="left:83px;top:592px"></div>
<div class="ig" style="left:112px;top:592px"></div>
<div class="ig" style="left:141px;top:592px"></div>
<div class="ig" style="left:170px;top:592px"></div>
<div class="ig" style="left:199px;top:592px"></div>
<div class="ln" style="top:592px;width:40px">118</div>
<div class="cl" style="left:54.5px;top:592px">                        <span class="k">"<i>caching</i>"</span><span class="p">:</span><span class="p"> </span><span class="s">"ReadWrite"</span></div>
<div class="ig" style="left:54px;top:610px"></div>
<div class="ig" style="left:83px;top:610px"></div>
<div class="ig" style="left:112px;top:610px"></div>
<div class="ig" style="left:141px;top:610px"></div>
<div class="ig" style="left:170px;top:610px"></div>
<div class="ln" style="top:610px;width:40px">119</div>
<div class="cl" style="left:54.5px;top:610px">                    <span style="color:#179FFF">}</span></div>
<div class="ig" style="left:54px;top:628px"></div>
<div class="ig" style="left:83px;top:628px"></div>
<div class="ig" style="left:112px;top:628px"></div>
<div class="ig" style="left:141px;top:628px"></div>
<div class="ln" style="top:628px;width:40px">120</div>
<div class="cl" style="left:54.5px;top:628px">                <span style="color:#DA70D6">}</span><span class="p">,</span></div>
<div class="ig" style="left:54px;top:646px"></div>
<div class="ig" style="left:83px;top:646px"></div>
<div class="ig" style="left:112px;top:646px"></div>
<div class="ig" style="left:141px;top:646px"></div>
<div class="ln" style="top:646px;width:40px">121</div>
<div class="cl" style="left:54.5px;top:646px">                <span class="k">"<i>networkProfile</i>"</span><span class="p">:</span><span class="p"> </span><span style="color:#DA70D6">{</span></div>
<div class="ig" style="left:54px;top:664px"></div>
<div class="ig" style="left:83px;top:664px"></div>
<div class="ig" style="left:112px;top:664px"></div>
<div class="ig" style="left:141px;top:664px"></div>
<div class="ig" style="left:170px;top:664px"></div>
<div class="ln" style="top:664px;width:40px">122</div>
<div class="cl" style="left:54.5px;top:664px">                    <span class="k">"<i>networkInterfaces</i>"</span><span class="p">:</span><span class="p"> </span><span style="color:#179FFF">[</span></div>
<div class="ig" style="left:54px;top:682px"></div>
<div class="ig" style="left:83px;top:682px"></div>
<div class="ig" style="left:112px;top:682px"></div>
<div class="ig" style="left:141px;top:682px"></div>
<div class="ig" style="left:170px;top:682px"></div>
<div class="ig" style="left:199px;top:682px"></div>
<div class="ln" style="top:682px;width:40px">123</div>
<div class="cl" style="left:54.5px;top:682px">                        <span style="color:#FFD700">{</span></div>
<div class="ig" style="left:54px;top:700px"></div>
<div class="ig" style="left:83px;top:700px"></div>
<div class="ig" style="left:112px;top:700px"></div>
<div class="ig" style="left:141px;top:700px"></div>
<div class="ig" style="left:170px;top:700px"></div>
<div class="ig" style="left:199px;top:700px"></div>
<div class="ig" style="left:228px;top:700px"></div>
<div class="ln" style="top:700px;width:40px">124</div>
<div class="cl" style="left:54.5px;top:700px">                            <span class="k">"<i>id</i>"</span><span class="p">:</span><span class="p"> </span><span class="s">"[resourceId('Microsoft.Network/networkInterfaces', variables('nicName'))]"</span></div>
<div class="ig" style="left:54px;top:718px"></div>
<div class="ig" style="left:83px;top:718px"></div>
<div class="ig" style="left:112px;top:718px"></div>
<div class="ig" style="left:141px;top:718px"></div>
<div class="ig" style="left:170px;top:718px"></div>
<div class="ig" style="left:199px;top:718px"></div>
<div class="ln" style="top:718px;width:40px">125</div>
<div class="cl" style="left:54.5px;top:718px">                        <span style="color:#FFD700">}</span></div>
<div class="ig" style="left:54px;top:736px"></div>
<div class="ig" style="left:83px;top:736px"></div>
<div class="ig" style="left:112px;top:736px"></div>
<div class="ig" style="left:141px;top:736px"></div>
<div class="ig" style="left:170px;top:736px"></div>
<div class="ln" style="top:736px;width:40px">126</div>
<div class="cl" style="left:54.5px;top:736px">                    <span style="color:#179FFF">]</span></div>
<div class="ig" style="left:54px;top:754px"></div>
<div class="ig" style="left:83px;top:754px"></div>
<div class="ig" style="left:112px;top:754px"></div>
<div class="ig" style="left:141px;top:754px"></div>
<div class="ln" style="top:754px;width:40px">127</div>
<div class="cl" style="left:54.5px;top:754px">                <span style="color:#DA70D6">}</span></div>
<div class="ig" style="left:54px;top:772px"></div>
<div class="ig" style="left:83px;top:772px"></div>
<div class="ig" style="left:112px;top:772px"></div>
<div class="ln" style="top:772px;width:40px">128</div>
<div class="cl" style="left:54.5px;top:772px">            <span style="color:#FFD700">}</span><span class="p">,</span></div>
<div class="ig" style="left:54px;top:790px"></div>
<div class="ig" style="left:83px;top:790px"></div>
<div class="ig" style="left:112px;top:790px"></div>
<div class="ln" style="top:790px;width:40px">129</div>
<div class="cl" style="left:54.5px;top:790px">            <span class="k">"<i>dependsOn</i>"</span><span class="p">:</span><span class="p"> </span><span style="color:#FFD700">[</span></div>
<div class="ig" style="left:54px;top:808px"></div>
<div class="ig" style="left:83px;top:808px"></div>
<div class="ig" style="left:112px;top:808px"></div>
<div class="ig" style="left:141px;top:808px"></div>
<div class="ln" style="top:808px;width:40px">130</div>
<div class="cl" style="left:54.5px;top:808px">                <span class="s">"[resourceId('Microsoft.Network/networkInterfaces', concat(variables('nicName')))]"</span></div>
<div class="ig" style="left:54px;top:826px"></div>
<div class="ig" style="left:83px;top:826px"></div>
<div class="ig" style="left:112px;top:826px"></div>
<div class="ln" style="top:826px;width:40px">131</div>
<div class="cl" style="left:54.5px;top:826px">            <span style="color:#FFD700">]</span></div>
<div class="ig" style="left:54px;top:844px"></div>
<div class="ig" style="left:83px;top:844px"></div>
<div class="ln" style="top:844px;width:40px">132</div>
<div class="cl" style="left:54.5px;top:844px">        <span style="color:#179FFF">}</span><span class="p">,</span></div>
<div class="ig" style="left:54px;top:862px"></div>
<div class="ig" style="left:83px;top:862px"></div>
<div class="ln" style="top:862px;width:40px">133</div>
<div class="cl" style="left:54.5px;top:862px">        <span style="color:#179FFF">{</span></div>
<div class="ig" style="left:54px;top:880px"></div>
<div class="ig" style="left:83px;top:880px"></div>
<div class="ig" style="left:112px;top:880px"></div>
<div class="ln" style="top:880px;width:40px">134</div>
<div class="cl" style="left:54.5px;top:880px">            <span class="k">"<i>type</i>"</span><span class="p">:</span><span class="p"> </span><span class="s">"Microsoft.Compute/virtualMachines/extensions"</span><span class="p">,</span></div>
<div class="sticky" style="width:537px"><div class="ln" style="top:0px;width:40px">65</div><div class="cl" style="left:54.5px;top:0px">    <span class="k">"<i>resources</i>"</span><span class="p">:</span><span class="p"> </span><span style="color:#DA70D6">[</span></div><div class="ln" style="top:18px;width:40px">66</div><div class="cl" style="left:54.5px;top:18px">        <span style="color:#179FFF">{</span></div><div class="ln" style="top:36px;width:40px">71</div><div class="cl" style="left:54.5px;top:36px">            <span class="k">"<i>properties</i>"</span><span class="p">:</span><span class="p"> </span><span style="color:#FFD700">{</span></div></div><div class="stsh" style="width:533px"></div>
</div>
 <div class="pane" style="left:949px;top:96px;width:588px;height:896px">
<div style="position:absolute;left:54px;top:430px;width:397.1px;height:18px;background:#4f5034"></div><div style="position:absolute;left:451.1px;top:430px;width:300px;height:18px;background:#4d5e27"></div><div style="position:absolute;left:54px;top:448px;width:405.0px;height:18px;background:#435423"></div><div style="position:absolute;left:459.0px;top:448px;width:300px;height:18px;background:#3f442c"></div><div style="position:absolute;left:54px;top:160px;width:65px;height:18px;background:#3b2b26"></div>
<div class="ig" style="left:54px;top:52px"></div>
<div class="ig" style="left:83px;top:52px"></div>
<div class="ig" style="left:112px;top:52px"></div>
<div class="ig" style="left:141px;top:52px"></div>
<div class="ln" style="top:52px;width:40px">89</div>
<div class="cl" style="left:54.5px;top:52px">                <span class="k">"<i>enableIPForwarding</i>"</span><span class="p">:</span><span class="p"> </span><span class="n">false</span><span class="p">,</span></div>
<div class="ig" style="left:54px;top:70px"></div>
<div class="ig" style="left:83px;top:70px"></div>
<div class="ig" style="left:112px;top:70px"></div>
<div class="ig" style="left:141px;top:70px"></div>
<div class="ln" style="top:70px;width:40px">90</div>
<div class="cl" style="left:54.5px;top:70px">                <span class="k">"<i>networkSecurityGroup</i>"</span><span class="p">:</span><span class="p"> </span><span style="color:#DA70D6">{</span></div>
<div class="ig" style="left:54px;top:88px"></div>
<div class="ig" style="left:83px;top:88px"></div>
<div class="ig" style="left:112px;top:88px"></div>
<div class="ig" style="left:141px;top:88px"></div>
<div class="ig" style="left:170px;top:88px"></div>
<div class="ln" style="top:88px;width:40px">91</div>
<div class="cl" style="left:54.5px;top:88px">                    <span class="k">"<i>id</i>"</span><span class="p">:</span><span class="p"> </span><span class="s">"[concat(variables('networkSecurityGroupMap')[parameters('nsg')])]"</span></div>
<div class="ig" style="left:54px;top:106px"></div>
<div class="ig" style="left:83px;top:106px"></div>
<div class="ig" style="left:112px;top:106px"></div>
<div class="ig" style="left:141px;top:106px"></div>
<div class="ln" style="top:106px;width:40px">92</div>
<div class="cl" style="left:54.5px;top:106px">                <span style="color:#DA70D6">}</span></div>
<div class="ig" style="left:54px;top:124px"></div>
<div class="ig" style="left:83px;top:124px"></div>
<div class="ig" style="left:112px;top:124px"></div>
<div class="ln" style="top:124px;width:40px">93</div>
<div class="cl" style="left:54.5px;top:124px">            <span style="color:#FFD700">}</span></div>
<div class="ig" style="left:54px;top:142px"></div>
<div class="ig" style="left:83px;top:142px"></div>
<div class="ln" style="top:142px;width:40px">94</div>
<div class="cl" style="left:54.5px;top:142px">        <span style="color:#179FFF">}</span><span class="p">,</span></div>
<div class="ig" style="left:54px;top:160px"></div>
<div class="ig" style="left:83px;top:160px"></div>
<div class="ln" style="top:160px;width:40px">95</div>
<div class="cl" style="left:54.5px;top:160px">        <span style="color:#179FFF">{</span></div>
<div class="ig" style="left:54px;top:178px"></div>
<div class="ig" style="left:83px;top:178px"></div>
<div class="ig" style="left:112px;top:178px"></div>
<div class="ln" style="top:178px;width:40px">96</div>
<div class="cl" style="left:54.5px;top:178px">            <span class="k">"<i>type</i>"</span><span class="p">:</span><span class="p"> </span><span class="s">"Microsoft.Compute/virtualMachines"</span><span class="p">,</span></div>
<div class="ig" style="left:54px;top:196px"></div>
<div class="ig" style="left:83px;top:196px"></div>
<div class="ig" style="left:112px;top:196px"></div>
<div class="ln" style="top:196px;width:40px">97</div>
<div class="cl" style="left:54.5px;top:196px">            <span class="k">"<i>apiVersion</i>"</span><span class="p">:</span><span class="p"> </span><span class="s">"2021-04-01"</span><span class="p">,</span></div>
<div class="ig" style="left:54px;top:214px"></div>
<div class="ig" style="left:83px;top:214px"></div>
<div class="ig" style="left:112px;top:214px"></div>
<div class="ln" style="top:214px;width:40px">98</div>
<div class="cl" style="left:54.5px;top:214px">            <span class="k">"<i>name</i>"</span><span class="p">:</span><span class="p"> </span><span class="s">"[parameters('vmName')]"</span><span class="p">,</span></div>
<div class="ig" style="left:54px;top:232px"></div>
<div class="ig" style="left:83px;top:232px"></div>
<div class="ig" style="left:112px;top:232px"></div>
<div class="ln" style="top:232px;width:40px">99</div>
<div class="cl" style="left:54.5px;top:232px">            <span class="k">"<i>location</i>"</span><span class="p">:</span><span class="p"> </span><span class="s">"[parameters('location')]"</span><span class="p">,</span></div>
<div class="ig" style="left:54px;top:250px"></div>
<div class="ig" style="left:83px;top:250px"></div>
<div class="ig" style="left:112px;top:250px"></div>
<div class="ln" style="top:250px;width:40px">100</div>
<div class="cl" style="left:54.5px;top:250px">            <span class="k">"<i>tags</i>"</span><span class="p">:</span><span class="p"> </span><span style="color:#FFD700">{</span></div>
<div class="ig" style="left:54px;top:268px"></div>
<div class="ig" style="left:83px;top:268px"></div>
<div class="ig" style="left:112px;top:268px"></div>
<div class="ig" style="left:141px;top:268px"></div>
<div class="ln" style="top:268px;width:40px">101</div>
<div class="cl" style="left:54.5px;top:268px">                <span class="k">"<i>owner</i>"</span><span class="p">:</span><span class="p"> </span><span class="s">"[parameters('vmOwner')]"</span><span class="p">,</span></div>
<div class="ig" style="left:54px;top:286px"></div>
<div class="ig" style="left:83px;top:286px"></div>
<div class="ig" style="left:112px;top:286px"></div>
<div class="ig" style="left:141px;top:286px"></div>
<div class="ln" style="top:286px;width:40px">102</div>
<div class="cl" style="left:54.5px;top:286px">                <span class="k">"<i>type</i>"</span><span class="p">:</span><span class="p"> </span><span class="s">"[parameters('vmType')]"</span></div>
<div class="ig" style="left:54px;top:304px"></div>
<div class="ig" style="left:83px;top:304px"></div>
<div class="ig" style="left:112px;top:304px"></div>
<div class="ln" style="top:304px;width:40px">103</div>
<div class="cl" style="left:54.5px;top:304px">            <span style="color:#FFD700">}</span><span class="p">,</span></div>
<div class="ig" style="left:54px;top:322px"></div>
<div class="ig" style="left:83px;top:322px"></div>
<div class="ig" style="left:112px;top:322px"></div>
<div class="ln" style="top:322px;width:40px">104</div>
<div class="cl" style="left:54.5px;top:322px">            <span class="k">"<i>properties</i>"</span><span class="p">:</span><span class="p"> </span><span style="color:#FFD700">{</span></div>
<div class="ig" style="left:54px;top:340px"></div>
<div class="ig" style="left:83px;top:340px"></div>
<div class="ig" style="left:112px;top:340px"></div>
<div class="ig" style="left:141px;top:340px"></div>
<div class="ln" style="top:340px;width:40px">105</div>
<div class="cl" style="left:54.5px;top:340px">                <span class="k">"<i>hardwareProfile</i>"</span><span class="p">:</span><span class="p"> </span><span style="color:#DA70D6">{</span></div>
<div class="ig" style="left:54px;top:358px"></div>
<div class="ig" style="left:83px;top:358px"></div>
<div class="ig" style="left:112px;top:358px"></div>
<div class="ig" style="left:141px;top:358px"></div>
<div class="ig" style="left:170px;top:358px"></div>
<div class="ln" style="top:358px;width:40px">106</div>
<div class="cl" style="left:54.5px;top:358px">                    <span class="k">"<i>vmSize</i>"</span><span class="p">:</span><span class="p"> </span><span class="s">"[variables('vmSize')]"</span></div>
<div class="ig" style="left:54px;top:376px"></div>
<div class="ig" style="left:83px;top:376px"></div>
<div class="ig" style="left:112px;top:376px"></div>
<div class="ig" style="left:141px;top:376px"></div>
<div class="ln" style="top:376px;width:40px">107</div>
<div class="cl" style="left:54.5px;top:376px">                <span style="color:#DA70D6">}</span><span class="p">,</span></div>
<div class="ig" style="left:54px;top:394px"></div>
<div class="ig" style="left:83px;top:394px"></div>
<div class="ig" style="left:112px;top:394px"></div>
<div class="ig" style="left:141px;top:394px"></div>
<div class="ln" style="top:394px;width:40px">108</div>
<div class="cl" style="left:54.5px;top:394px">                <span class="k">"<i>storageProfile</i>"</span><span class="p">:</span><span class="p"> </span><span style="color:#DA70D6">{</span></div>
<div class="ig" style="left:54px;top:412px"></div>
<div class="ig" style="left:83px;top:412px"></div>
<div class="ig" style="left:112px;top:412px"></div>
<div class="ig" style="left:141px;top:412px"></div>
<div class="ig" style="left:170px;top:412px"></div>
<div class="ln" style="top:412px;width:40px">109</div>
<div class="cl" style="left:54.5px;top:412px">                    <span class="k">"<i>imageReference</i>"</span><span class="p">:</span><span class="p"> </span><span style="color:#179FFF">{</span></div>
<div class="ig" style="left:54px;top:430px"></div>
<div class="ig" style="left:83px;top:430px"></div>
<div class="ig" style="left:112px;top:430px"></div>
<div class="ig" style="left:141px;top:430px"></div>
<div class="ig" style="left:170px;top:430px"></div>
<div class="ig" style="left:199px;top:430px;background:#a8a89c"></div>
<div class="ln" style="top:430px;width:40px;color:#e8e8e0;font-weight:bold">110</div>
<div class="mk" style="left:41px;top:430px">+</div>
<div class="cl" style="left:54.5px;top:430px">                        <span class="k">"<i>id</i>"</span><span class="p">:</span><span class="p"> </span><span class="s">"[parameters('imageID')]"</span><span class="p">,</span></div>
<div class="ig" style="left:54px;top:448px"></div>
<div class="ig" style="left:83px;top:448px"></div>
<div class="ig" style="left:112px;top:448px"></div>
<div class="ig" style="left:141px;top:448px"></div>
<div class="ig" style="left:170px;top:448px"></div>
<div class="ig" style="left:199px;top:448px;background:#a8a89c"></div>
<div class="ln" style="top:448px;width:40px">111</div>
<div class="mk" style="left:41px;top:448px">+</div>
<div class="cl" style="left:54.5px;top:448px">                        <span class="k">"<i>publisher</i>"</span><span class="p">:</span><span class="p"> </span><span class="s">"Microsoft.Compute"</span></div>
<div class="ig" style="left:54px;top:466px"></div>
<div class="ig" style="left:83px;top:466px"></div>
<div class="ig" style="left:112px;top:466px"></div>
<div class="ig" style="left:141px;top:466px"></div>
<div class="ig" style="left:170px;top:466px"></div>
<div class="ln" style="top:466px;width:40px">112</div>
<div class="cl" style="left:54.5px;top:466px">                    <span style="color:#179FFF">}</span><span class="p">,</span></div>
<div class="ig" style="left:54px;top:484px"></div>
<div class="ig" style="left:83px;top:484px"></div>
<div class="ig" style="left:112px;top:484px"></div>
<div class="ig" style="left:141px;top:484px"></div>
<div class="ig" style="left:170px;top:484px"></div>
<div class="ln" style="top:484px;width:40px">113</div>
<div class="cl" style="left:54.5px;top:484px">                    <span class="k">"<i>osDisk</i>"</span><span class="p">:</span><span class="p"> </span><span style="color:#179FFF">{</span></div>
<div class="ig" style="left:54px;top:502px"></div>
<div class="ig" style="left:83px;top:502px"></div>
<div class="ig" style="left:112px;top:502px"></div>
<div class="ig" style="left:141px;top:502px"></div>
<div class="ig" style="left:170px;top:502px"></div>
<div class="ig" style="left:199px;top:502px"></div>
<div class="ln" style="top:502px;width:40px">114</div>
<div class="cl" style="left:54.5px;top:502px">                        <span class="k">"<i>createOption</i>"</span><span class="p">:</span><span class="p"> </span><span class="s">"FromImage"</span><span class="p">,</span></div>
<div class="ig" style="left:54px;top:520px"></div>
<div class="ig" style="left:83px;top:520px"></div>
<div class="ig" style="left:112px;top:520px"></div>
<div class="ig" style="left:141px;top:520px"></div>
<div class="ig" style="left:170px;top:520px"></div>
<div class="ig" style="left:199px;top:520px"></div>
<div class="ln" style="top:520px;width:40px">115</div>
<div class="cl" style="left:54.5px;top:520px">                        <span class="k">"<i>managedDisk</i>"</span><span class="p">:</span><span class="p"> </span><span style="color:#FFD700">{</span></div>
<div class="ig" style="left:54px;top:538px"></div>
<div class="ig" style="left:83px;top:538px"></div>
<div class="ig" style="left:112px;top:538px"></div>
<div class="ig" style="left:141px;top:538px"></div>
<div class="ig" style="left:170px;top:538px"></div>
<div class="ig" style="left:199px;top:538px"></div>
<div class="ig" style="left:228px;top:538px"></div>
<div class="ln" style="top:538px;width:40px">116</div>
<div class="cl" style="left:54.5px;top:538px">                            <span class="k">"<i>storageAccountType</i>"</span><span class="p">:</span><span class="p"> </span><span class="s">"[variables('storageAccountType')]"</span></div>
<div class="ig" style="left:54px;top:556px"></div>
<div class="ig" style="left:83px;top:556px"></div>
<div class="ig" style="left:112px;top:556px"></div>
<div class="ig" style="left:141px;top:556px"></div>
<div class="ig" style="left:170px;top:556px"></div>
<div class="ig" style="left:199px;top:556px"></div>
<div class="ln" style="top:556px;width:40px">117</div>
<div class="cl" style="left:54.5px;top:556px">                        <span style="color:#FFD700">}</span><span class="p">,</span></div>
<div class="ig" style="left:54px;top:574px"></div>
<div class="ig" style="left:83px;top:574px"></div>
<div class="ig" style="left:112px;top:574px"></div>
<div class="ig" style="left:141px;top:574px"></div>
<div class="ig" style="left:170px;top:574px"></div>
<div class="ig" style="left:199px;top:574px"></div>
<div class="ln" style="top:574px;width:40px">118</div>
<div class="cl" style="left:54.5px;top:574px">                        <span class="k">"<i>diskSizeGB</i>"</span><span class="p">:</span><span class="p"> </span><span class="s">"[parameters('diskSizeGB')]"</span><span class="p">,</span></div>
<div class="ig" style="left:54px;top:592px"></div>
<div class="ig" style="left:83px;top:592px"></div>
<div class="ig" style="left:112px;top:592px"></div>
<div class="ig" style="left:141px;top:592px"></div>
<div class="ig" style="left:170px;top:592px"></div>
<div class="ig" style="left:199px;top:592px"></div>
<div class="ln" style="top:592px;width:40px">119</div>
<div class="cl" style="left:54.5px;top:592px">                        <span class="k">"<i>caching</i>"</span><span class="p">:</span><span class="p"> </span><span class="s">"ReadWrite"</span></div>
<div class="ig" style="left:54px;top:610px"></div>
<div class="ig" style="left:83px;top:610px"></div>
<div class="ig" style="left:112px;top:610px"></div>
<div class="ig" style="left:141px;top:610px"></div>
<div class="ig" style="left:170px;top:610px"></div>
<div class="ln" style="top:610px;width:40px">120</div>
<div class="cl" style="left:54.5px;top:610px">                    <span style="color:#179FFF">}</span></div>
<div class="ig" style="left:54px;top:628px"></div>
<div class="ig" style="left:83px;top:628px"></div>
<div class="ig" style="left:112px;top:628px"></div>
<div class="ig" style="left:141px;top:628px"></div>
<div class="ln" style="top:628px;width:40px">121</div>
<div class="cl" style="left:54.5px;top:628px">                <span style="color:#DA70D6">}</span><span class="p">,</span></div>
<div class="ig" style="left:54px;top:646px"></div>
<div class="ig" style="left:83px;top:646px"></div>
<div class="ig" style="left:112px;top:646px"></div>
<div class="ig" style="left:141px;top:646px"></div>
<div class="ln" style="top:646px;width:40px">122</div>
<div class="cl" style="left:54.5px;top:646px">                <span class="k">"<i>networkProfile</i>"</span><span class="p">:</span><span class="p"> </span><span style="color:#DA70D6">{</span></div>
<div class="ig" style="left:54px;top:664px"></div>
<div class="ig" style="left:83px;top:664px"></div>
<div class="ig" style="left:112px;top:664px"></div>
<div class="ig" style="left:141px;top:664px"></div>
<div class="ig" style="left:170px;top:664px"></div>
<div class="ln" style="top:664px;width:40px">123</div>
<div class="cl" style="left:54.5px;top:664px">                    <span class="k">"<i>networkInterfaces</i>"</span><span class="p">:</span><span class="p"> </span><span style="color:#179FFF">[</span></div>
<div class="ig" style="left:54px;top:682px"></div>
<div class="ig" style="left:83px;top:682px"></div>
<div class="ig" style="left:112px;top:682px"></div>
<div class="ig" style="left:141px;top:682px"></div>
<div class="ig" style="left:170px;top:682px"></div>
<div class="ig" style="left:199px;top:682px"></div>
<div class="ln" style="top:682px;width:40px">124</div>
<div class="cl" style="left:54.5px;top:682px">                        <span style="color:#FFD700">{</span></div>
<div class="ig" style="left:54px;top:700px"></div>
<div class="ig" style="left:83px;top:700px"></div>
<div class="ig" style="left:112px;top:700px"></div>
<div class="ig" style="left:141px;top:700px"></div>
<div class="ig" style="left:170px;top:700px"></div>
<div class="ig" style="left:199px;top:700px"></div>
<div class="ig" style="left:228px;top:700px"></div>
<div class="ln" style="top:700px;width:40px">125</div>
<div class="cl" style="left:54.5px;top:700px">                            <span class="k">"<i>id</i>"</span><span class="p">:</span><span class="p"> </span><span class="s">"[resourceId('Microsoft.Network/networkInterfaces', variables('nicName'))]"</span></div>
<div class="ig" style="left:54px;top:718px"></div>
<div class="ig" style="left:83px;top:718px"></div>
<div class="ig" style="left:112px;top:718px"></div>
<div class="ig" style="left:141px;top:718px"></div>
<div class="ig" style="left:170px;top:718px"></div>
<div class="ig" style="left:199px;top:718px"></div>
<div class="ln" style="top:718px;width:40px">126</div>
<div class="cl" style="left:54.5px;top:718px">                        <span style="color:#FFD700">}</span></div>
<div class="ig" style="left:54px;top:736px"></div>
<div class="ig" style="left:83px;top:736px"></div>
<div class="ig" style="left:112px;top:736px"></div>
<div class="ig" style="left:141px;top:736px"></div>
<div class="ig" style="left:170px;top:736px"></div>
<div class="ln" style="top:736px;width:40px">127</div>
<div class="cl" style="left:54.5px;top:736px">                    <span style="color:#179FFF">]</span></div>
<div class="ig" style="left:54px;top:754px"></div>
<div class="ig" style="left:83px;top:754px"></div>
<div class="ig" style="left:112px;top:754px"></div>
<div class="ig" style="left:141px;top:754px"></div>
<div class="ln" style="top:754px;width:40px">128</div>
<div class="cl" style="left:54.5px;top:754px">                <span style="color:#DA70D6">}</span></div>
<div class="ig" style="left:54px;top:772px"></div>
<div class="ig" style="left:83px;top:772px"></div>
<div class="ig" style="left:112px;top:772px"></div>
<div class="ln" style="top:772px;width:40px">129</div>
<div class="cl" style="left:54.5px;top:772px">            <span style="color:#FFD700">}</span><span class="p">,</span></div>
<div class="ig" style="left:54px;top:790px"></div>
<div class="ig" style="left:83px;top:790px"></div>
<div class="ig" style="left:112px;top:790px"></div>
<div class="ln" style="top:790px;width:40px">130</div>
<div class="cl" style="left:54.5px;top:790px">            <span class="k">"<i>dependsOn</i>"</span><span class="p">:</span><span class="p"> </span><span style="color:#FFD700">[</span></div>
<div class="ig" style="left:54px;top:808px"></div>
<div class="ig" style="left:83px;top:808px"></div>
<div class="ig" style="left:112px;top:808px"></div>
<div class="ig" style="left:141px;top:808px"></div>
<div class="ln" style="top:808px;width:40px">131</div>
<div class="cl" style="left:54.5px;top:808px">                <span class="s">"[resourceId('Microsoft.Network/networkInterfaces', concat(variables('nicName')))]"</span></div>
<div class="ig" style="left:54px;top:826px"></div>
<div class="ig" style="left:83px;top:826px"></div>
<div class="ig" style="left:112px;top:826px"></div>
<div class="ln" style="top:826px;width:40px">132</div>
<div class="cl" style="left:54.5px;top:826px">            <span style="color:#FFD700">]</span></div>
<div class="ig" style="left:54px;top:844px"></div>
<div class="ig" style="left:83px;top:844px"></div>
<div class="ln" style="top:844px;width:40px">133</div>
<div class="cl" style="left:54.5px;top:844px">        <span style="color:#179FFF">}</span><span class="p">,</span></div>
<div class="ig" style="left:54px;top:862px"></div>
<div class="ig" style="left:83px;top:862px"></div>
<div class="ln" style="top:862px;width:40px">134</div>
<div class="cl" style="left:54.5px;top:862px">        <span style="color:#179FFF">{</span></div>
<div class="ig" style="left:54px;top:880px"></div>
<div class="ig" style="left:83px;top:880px"></div>
<div class="ig" style="left:112px;top:880px"></div>
<div class="ln" style="top:880px;width:40px">135</div>
<div class="cl" style="left:54.5px;top:880px">            <span class="k">"<i>type</i>"</span><span class="p">:</span><span class="p"> </span><span class="s">"Microsoft.Compute/virtualMachines/extensions"</span><span class="p">,</span></div>
<div class="sticky" style="width:573px"><div class="ln" style="top:0px;width:40px">65</div><div class="cl" style="left:54.5px;top:0px">    <span class="k">"<i>resources</i>"</span><span class="p">:</span><span class="p"> </span><span style="color:#DA70D6">[</span></div><div class="ln" style="top:18px;width:40px">66</div><div class="cl" style="left:54.5px;top:18px">        <span style="color:#179FFF">{</span></div><div class="ln" style="top:36px;width:40px">71</div><div class="cl" style="left:54.5px;top:36px">            <span class="k">"<i>properties</i>"</span><span class="p">:</span><span class="p"> </span><span style="color:#FFD700">{</span></div></div><div class="stsh" style="width:569px"></div>
</div>


 <div id="status" class="w"></div>
<div class="abs" style="left:0;top:992px;width:35px;height:25px;background:#b5641c"></div>
<svg style="left:13px;top:996px" width="11" height="14" viewBox="0 0 11 14"><path d="M.8 4.5l4.2 3.4-4.2 4.6M9.2 1l-3.5 3.5 3.5 4.2" stroke="#f4f4ee" stroke-width="1.1" fill="none"/></svg>
<svg style="left:42px;top:996px" width="12" height="14" viewBox="0 0 12 14"><circle cx="2.6" cy="2.4" r="1.8" stroke="#e8e8e2" stroke-width="1.1" fill="none"/><circle cx="9.2" cy="4.4" r="1.8" stroke="#e8e8e2" stroke-width="1.1" fill="none"/><circle cx="2.6" cy="11.6" r="1.8" stroke="#e8e8e2" stroke-width="1.1" fill="none"/><path d="M2.6 4.2v5.6M2.6 9.6c0-3 6.6-1.8 6.6-3.4" stroke="#e8e8e2" stroke-width="1.1" fill="none"/></svg>
<div class="sbt" style="left:58px;top:995px;font-size:13px">main*</div>
<svg style="left:97px;top:996px" width="15" height="13" viewBox="0 0 15 13"><path d="M2 5.4A5.4 5.4 0 0 1 12.6 4.4M13 7.6A5.4 5.4 0 0 1 2.4 8.6" stroke="#e8e8e2" stroke-width="1.2" fill="none"/><path d="M10.4 4.4h3V1.4M4.6 8.6h-3v3" stroke="#e8e8e2" stroke-width="1.2" fill="none"/></svg>
<svg style="left:125px;top:996px" width="14" height="14" viewBox="0 0 14 14"><circle cx="7" cy="7" r="5.9" stroke="#e8e8e2" stroke-width="1.1" fill="none"/><path d="M4.6 4.6l4.8 4.8M9.4 4.6L4.6 9.4" stroke="#e8e8e2" stroke-width="1.1"/></svg>
<div class="sbt" style="left:142px;top:995px;font-size:12.8px">0</div>
<svg style="left:153px;top:995px" width="15" height="14" viewBox="0 0 15 14"><path d="M7.5 1L14 13H1z" stroke="#e8e8e2" stroke-width="1.1" fill="none" stroke-linejoin="round"/><path d="M7.5 5v4.4M7.5 10.4v1.2" stroke="#e8e8e2" stroke-width="1.1"/></svg>
<div class="sbt" style="left:171px;top:995px;font-size:12.8px">5</div>
<svg style="left:195px;top:996px" width="14" height="14" viewBox="0 0 14 14"><path d="M7 5.6L4.4 13.4M7 5.6l2.6 7.8M5.4 10.4h3.2" stroke="#e8e8e2" stroke-width="1.1" fill="none"/><circle cx="7" cy="4.6" r="1.2" stroke="#e8e8e2" stroke-width="1" fill="none"/><path d="M3.6 1.6a4.6 4.6 0 0 0 0 6M10.4 1.6a4.6 4.6 0 0 1 0 6M1.6 .4a7 7 0 0 0 0 8.4M12.4 .4a7 7 0 0 1 0 8.4" stroke="#e8e8e2" stroke-width="1" fill="none"/></svg>
<div class="sbt" style="left:212px;top:995px;font-size:12.8px">0</div>
<div class="sbt" style="left:235px;top:995px;font-size:12.8px">Prisma Cloud</div>
<div class="sbt" style="left:1227px;top:995px;font-size:12.8px">Ln 110, Col 1</div>
<div class="sbt" style="left:1320px;top:995px;font-size:12.8px">Spaces: 4</div>
<div class="sbt" style="left:1392px;top:995px;font-size:12.8px">UTF-8</div>
<div class="sbt" style="left:1444px;top:995px;font-size:12.8px">LF</div>
<div class="sbt" style="left:1471px;top:995px;font-size:12px;letter-spacing:1px">{}</div>
<div class="sbt" style="left:1491px;top:995px;font-size:12.8px">JSON</div>
<svg style="left:1539px;top:995px" width="14" height="15" viewBox="0 0 14 15"><path d="M2 11.6V7a5 5 0 0 1 7.4-4.4M11.8 7.4v4.2M.8 11.6h12.4M5.2 13.6h3.6" stroke="#e8e8e2" stroke-width="1.1" fill="none"/><circle cx="11" cy="3.2" r="2.4" fill="#e8e8e2"/></svg>
<!-- notification -->
<div class="abs" style="left:1106px;top:938px;width:450px;height:41px;background:#1e1f1c;border-radius:4px;box-shadow:0 0 8px 2px rgba(0,0,0,.45)"></div>
<svg style="left:1116px;top:951px" width="16" height="16" viewBox="0 0 16 16"><circle cx="8" cy="8" r="7" stroke="#3794ff" stroke-width="1.3" fill="none"/><path d="M8 6.8v5" stroke="#3794ff" stroke-width="1.5"/><circle cx="8" cy="4.6" r=".9" fill="#3794ff"/></svg>
<div class="abs" style="left:1137px;top:950px;font-size:13.7px;line-height:18px;color:#e0e0da;white-space:pre">Prisma Cloud has detected 3 code security issues in your project</div>

 <!--NOTIF-->
</div></div>
<div id="winb"></div>
</body></html>
